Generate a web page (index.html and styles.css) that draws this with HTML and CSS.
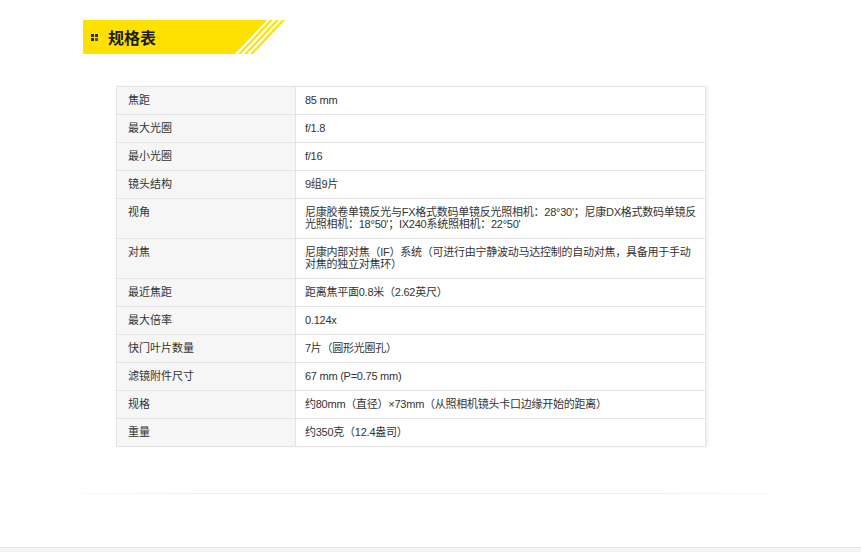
FILE: index.html
```html
<!DOCTYPE html>
<html lang="zh-CN">
<head>
<meta charset="utf-8">
<title>规格表</title>
<link rel="stylesheet" href="styles.css">
</head>
<body>
<div class="page">
  <div class="title-bar">
    <svg class="title-bg" width="202" height="34" viewBox="0 0 202 34">
      <polygon points="0,0 184,0 152,34 0,34" fill="#ffe100"/>
      <polygon points="187,0 190,0 158,34 155,34" fill="#ffe100"/>
      <polygon points="193,0 196,0 164,34 161,34" fill="#ffe100"/>
      <polygon points="199,0 202,0 170,34 167,34" fill="#ffe100"/>
    </svg>
    <div class="title-content">
      <svg class="title-icon" width="7" height="7" viewBox="0 0 7 7">
        <rect x="0" y="0" width="3" height="3" fill="#2b2b2b"/>
        <rect x="4" y="0" width="3" height="3" fill="#2b2b2b"/>
        <rect x="0" y="4" width="3" height="3" fill="#2b2b2b"/>
        <rect x="4" y="4" width="3" height="3" fill="#555"/>
      </svg>
      <h2 class="title-text">规格表</h2>
    </div>
  </div>

  <table class="spec">
    <tr><th>焦距</th><td>85 mm</td></tr>
    <tr><th>最大光圈</th><td>f/1.8</td></tr>
    <tr><th>最小光圈</th><td>f/16</td></tr>
    <tr><th>镜头结构</th><td>9组9片</td></tr>
    <tr><th>视角</th><td>尼康胶卷单镜反光与FX格式数码单镜反光照相机：28°30'；尼康DX格式数码单镜反光照相机：18°50'；IX240系统照相机：22°50'</td></tr>
    <tr><th>对焦</th><td>尼康内部对焦（IF）系统（可进行由宁静波动马达控制的自动对焦，具备用于手动对焦的独立对焦环）</td></tr>
    <tr><th>最近焦距</th><td>距离焦平面0.8米（2.62英尺）</td></tr>
    <tr><th>最大倍率</th><td>0.124x</td></tr>
    <tr><th>快门叶片数量</th><td>7片（圆形光圈孔）</td></tr>
    <tr><th>滤镜附件尺寸</th><td>67 mm (P=0.75 mm)</td></tr>
    <tr><th>规格</th><td>约80mm（直径）×73mm（从照相机镜头卡口边缘开始的距离）</td></tr>
    <tr><th>重量</th><td>约350克（12.4盎司）</td></tr>
  </table>

  <div class="divider"></div>
</div>
<div class="footer"></div>
</body>
</html>
```

FILE: styles.css
```css
html, body {
  margin: 0;
  padding: 0;
  background: #ffffff;
}

body {
  font-family: "Liberation Sans", "Noto Sans CJK SC", sans-serif;
  color: #333333;
}

.page {
  padding: 20px 0 0 83px;
}

.title-bar {
  display: grid;
  width: 202px;
  height: 34px;
}

.title-bg,
.title-content {
  grid-area: 1 / 1;
}

.title-bg {
  display: block;
}

.title-content {
  display: flex;
  align-items: center;
  padding-left: 8px;
  gap: 10px;
}

.title-icon {
  display: block;
  margin-top: 1px;
}

.title-text {
  margin: 0;
  font-family: "Noto Sans CJK SC", sans-serif;
  font-size: 16px;
  font-weight: bold;
  line-height: 20px;
  color: #1c1c1c;
}

.spec {
  margin: 32px 0 0 33px;
  width: 590px;
  border-collapse: collapse;
  font-size: 11px;
  line-height: 12px;
  box-shadow: 2px 0 2px rgba(0, 0, 0, 0.06);
}

.spec th,
.spec td {
  border: 1px solid #e4e4e4;
  padding: 7px 8px 8px 10px;
  text-align: left;
  vertical-align: top;
  font-weight: normal;
  color: #333333;
}

.spec th {
  width: 159px;
  background: #f6f6f6;
  padding-left: 11px;
}

.spec td {
  background: #ffffff;
  padding-left: 9px;
  padding-right: 6px;
  letter-spacing: -0.25px;
}

.divider {
  margin-top: 46px;
  width: 685px;
  height: 1px;
  background: linear-gradient(to right, #f6f6f6, #efefef 20%, #efefef 80%, #f6f6f6);
}

.footer {
  margin-top: 53px;
  height: 6px;
  border-top: 1px solid #e4e4e4;
  background: #f4f4f4;
}
```
